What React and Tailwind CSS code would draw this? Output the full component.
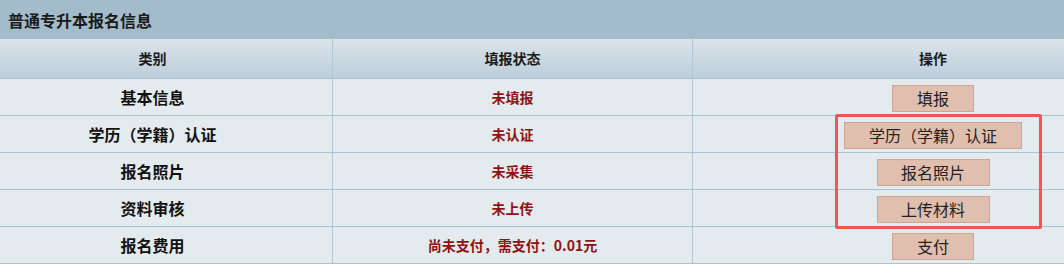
const rows = [
  { name: '基本信息', status: '未填报', btn: '填报', w: 'w-[82px]' },
  { name: '学历（学籍）认证', status: '未认证', btn: '学历（学籍）认证', w: 'w-[178px]' },
  { name: '报名照片', status: '未采集', btn: '报名照片', w: 'w-[113px]' },
  { name: '资料审核', status: '未上传', btn: '上传材料', w: 'w-[113px]' },
  { name: '报名费用', status: '尚未支付，需支付：0.01元', btn: '支付', w: 'w-[82px]' },
];

// table is wider than the viewport: it is cropped on both sides
const cols = 'grid grid-cols-[360px_360px_480px] w-[1200px] ml-[-27px]';

export default function App() {
  return (
    <div className="relative w-[1064px] h-[264px] overflow-hidden bg-[#e4ebef] font-['Noto_Sans_CJK_SC',sans-serif]">
      <div className="h-[39px] bg-[#a3bccb] flex items-center px-2 text-[16px] font-bold text-[#1a1a1a]">
        普通专升本报名信息
      </div>
      <div className={`${cols} h-[40px] bg-gradient-to-b from-[#dbe3e9] to-[#bccfdc] border-b border-[#a9c1d3] text-[14px] font-bold text-[#1a1a1a]`}>
        <div className="flex items-center justify-center border-r border-[#b4c7d6]">类别</div>
        <div className="flex items-center justify-center border-r border-[#b4c7d6]">填报状态</div>
        <div className="flex items-center justify-center">操作</div>
      </div>
      {rows.map((r, i) => (
        <div key={i} className={`${cols} h-[37px] border-b border-[#a9c3d3]`}>
          <div className="flex items-center justify-center border-r border-[#b4c7d6] text-[16px] font-bold text-[#111]">{r.name}</div>
          <div className="flex items-center justify-center border-r border-[#b4c7d6] text-[14px] font-bold text-[#8e1414]">{r.status}</div>
          <div className="flex items-center justify-center pt-[2px]">
            <button className={`${r.w} h-[27px] bg-[#e0bfae] border border-[#cda592] text-[16px] text-[#222] flex items-center justify-center leading-none`}>
              {r.btn}
            </button>
          </div>
        </div>
      ))}
      <div className="absolute left-[835px] top-[114px] w-[207px] h-[115px] border-[3px] border-[#f25556] rounded-[2px]" />
    </div>
  );
}
